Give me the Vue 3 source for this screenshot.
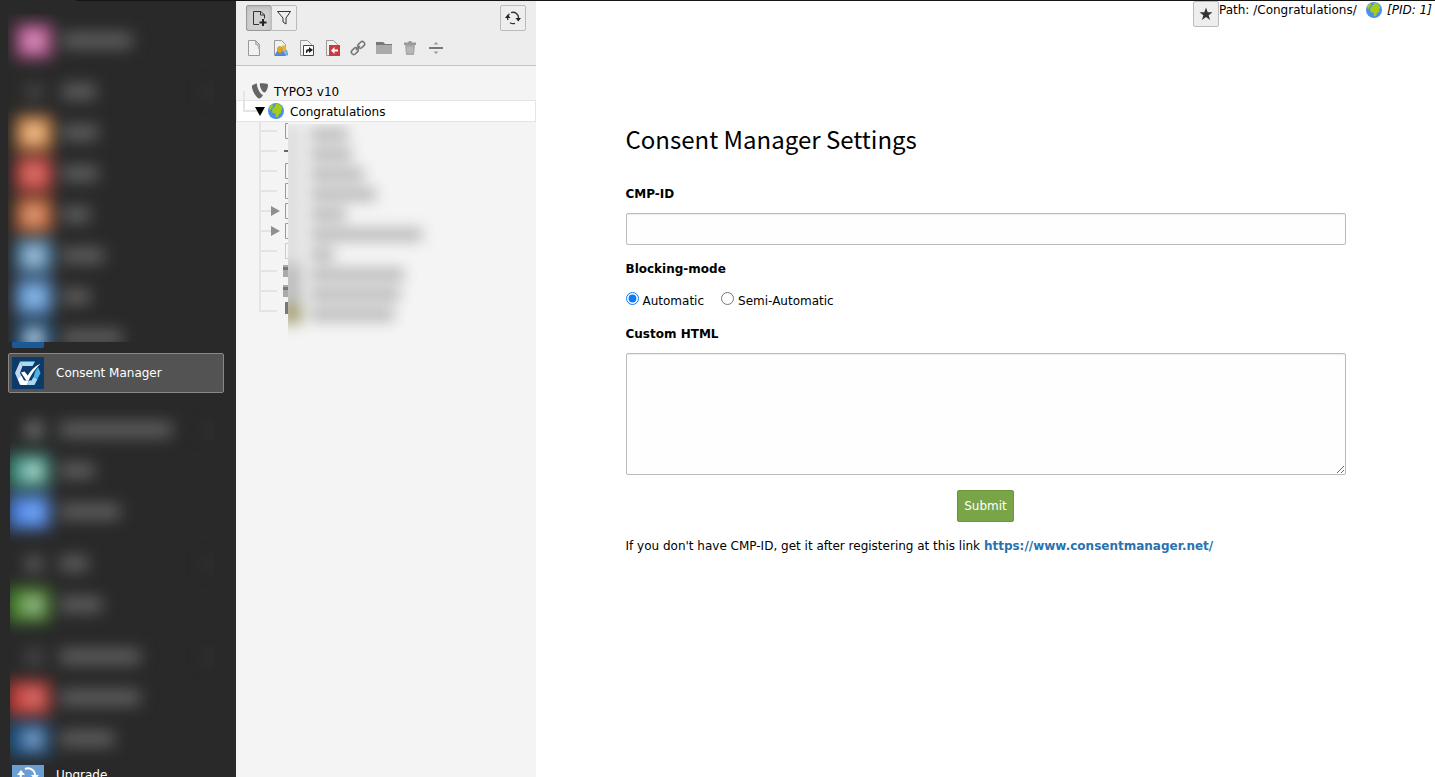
<script setup>
import { ref } from 'vue'

const cmpId = ref('')
const mode = ref('automatic')
const customHtml = ref('')

const upperModules = [
  { color: '#b8558f', core: '#d898c0', text: 70 },
  { head: true, text: 34 },
  { color: '#d98a48', core: '#ecc49c', text: 36 },
  { color: '#d0473f', core: '#d87a76', text: 36 },
  { color: '#cc6a3a', core: '#dca080', text: 28 },
  { color: '#4f8ab8', core: '#b4c8d8', text: 42 },
  { color: '#5b97d8', core: '#94bbe4', text: 28 },
  { color: '#1f5788', core: '#c8d4e0', text: 60 }
]
const lowerModules = [
  { head: true, text: 112, glyph: '#7a7a7a' },
  { color: '#3f9080', core: '#b8dcd6', text: 34 },
  { color: '#4a80dd', core: '#7aacfa', text: 60 },
  { head: true, text: 28, glyph: '#606060' },
  { color: '#4b8a2c', core: '#a0b898', text: 42 },
  { head: true, text: 80, glyph: '#4c4c4c' },
  { color: '#c4403a', core: '#d87470', text: 80 },
  { color: '#20568a', core: '#8aa8cc', text: 54 }
]
const pages = [
  { kind: 'page', text: 38 },
  { kind: 'divider', text: 42 },
  { kind: 'page', text: 54 },
  { kind: 'page', text: 66 },
  { kind: 'page', open: true, text: 36 },
  { kind: 'page', open: true, text: 112 },
  { kind: 'pale', text: 24 },
  { kind: 'folder', text: 94 },
  { kind: 'folder', text: 90 },
  { kind: 'dark', text: 84 }
]
</script>

<template>
  <div class="shell">
    <nav class="modules" aria-label="Modules">
      <div class="hazy upper">
        <ul class="haze">
          <li v-for="(m, i) in upperModules" :key="i" :class="{ head: m.head }">
            <span v-if="!m.head" class="blob" :style="{ background: m.color }"><i :style="{ background: m.core }"></i></span>
            <span v-else class="glyph"></span>
            <span class="bar" :style="{ width: m.text + 'px' }"></span>
            <span v-if="m.head" class="chev"></span>
          </li>
        </ul>
      </div>
      <div class="tile-edge"></div>
      <a href="#" class="module active">
        <svg class="tile" viewBox="0 0 32 32" aria-hidden="true">
          <rect width="32" height="32" rx="1" fill="#0b3a6b" />
          <path d="M8 4.500h15L20.500 9h-10z" fill="#a6dcf2" />
          <path d="M8 4.500L3 16l5 12 3.500-5L8 16l2.500-7z" fill="#c3d5ee" />
          <path d="M6 22l2.500 6H15l2-4.500h-5L9.500 19z" fill="#fff" />
          <path d="M15 28h7.500l3-6-4-2-2 3.500H17z" fill="#a9d8f1" />
          <path d="M25.500 22l3-6-2.500-6-3 5-1.500 5z" fill="#4bb4e0" />
          <path d="M9 15.500l3.500-1 3.200 4Q20.500 10.500 28.500 6.500 21 14 16.500 23.500h-2.200z" fill="#fff" />
        </svg>
        <span>Consent Manager</span>
      </a>
      <div class="hazy lower">
        <ul class="haze">
          <li v-for="(m, i) in lowerModules" :key="i" :class="{ head: m.head }">
            <span v-if="!m.head" class="blob wide" :style="{ background: m.color }"><i :style="{ background: m.core }"></i></span>
            <span v-else class="glyph" :style="{ background: m.glyph }"></span>
            <span class="bar" :style="{ width: m.text + 'px' }"></span>
            <span v-if="m.head" class="chev"></span>
          </li>
        </ul>
      </div>
      <a href="#" class="module upgrade">
        <svg class="tile" viewBox="0 0 32 32" aria-hidden="true">
          <rect width="32" height="32" fill="#6b9fd2" />
          <g fill="none" stroke="#fff" stroke-width="2"><path d="M13 10a7 7 0 0 1 10 7" /><path d="M19 23a7 7 0 0 1-10-8" /></g>
          <path d="M19 16h8l-4 5zM5 16h8l-4-5z" fill="#fff" />
        </svg>
        <span>Upgrade</span>
      </a>
    </nav>

    <section class="pagetree" aria-label="Page tree">
      <header class="toolbar">
        <div class="tools">
          <div class="group">
            <button type="button" class="tool pressed" aria-label="Create new pages">
              <svg width="16" height="16" viewBox="0 0 16 16"><path d="M8 14.500H2.500V1.500H10L13.500 5V8.500M9.500 1.500V5H13.500" fill="none" stroke="#333" /><path d="M12 9v7M8.500 12.500h7" stroke="#222" stroke-width="2" /></svg>
            </button>
            <button type="button" class="tool" aria-label="Filter">
              <svg width="16" height="16" viewBox="0 0 16 16"><path d="M1.500 1.500h13L10 8v6l-3 -2V8z" fill="none" stroke="#333" /></svg>
            </button>
          </div>
          <button type="button" class="tool single" aria-label="Refresh">
            <svg width="16" height="16" viewBox="0 0 16 16"><path d="M6 2.700a5.500 5.500 0 0 1 7.500 5.500M2.500 8a5.500 5.500 0 0 0 .6 2M10 13.300a5.500 5.500 0 0 1-5 -.6M2.500 8a5.500 5.500 0 0 1 2-4.200" fill="none" stroke="#333" stroke-width="1.300" /><path d="M10.500 8h5.500l-2.700 3.500zM0 8h5.500L2.700 4.500z" fill="#222" /></svg>
          </button>
        </div>
        <div class="newpages">
          <svg viewBox="0 0 16 16"><path d="M2.500.500h7l4 4v11h-11z" fill="#f1f1f1" stroke="#999" /><path d="M9.500.500v4h4v6z" fill="#ccc" stroke="#999" stroke-width=".6" /></svg>
          <svg viewBox="0 0 16 16"><path d="M2.500.500h7l4 4v11h-11z" fill="#f1f1f1" stroke="#999" /><path d="M11 10h3.500l1.500 5h-6z" fill="#84baf0" stroke="#4d79b5" stroke-width=".6" /><path d="M9.500 10V7.500c0-3 4.500-3 4.500 0V10l-2 1z" fill="#efb22b" /><path d="M3.500 15.700c0-4 2-4.200 4.500-4.200s4.500.200 4.500 4.200z" fill="#4b91e2" stroke="#3a6fb0" stroke-width=".5" /><path d="M5.500 12V9c0-3.500 4.500-3.500 4.500 0v3l-2 1.500z" fill="#e7a521" stroke="#8c671d" stroke-width=".4" /></svg>
          <svg viewBox="0 0 16 16"><path d="M2.500.500h7l4 4v11h-11z" fill="#f1f1f1" stroke="#999" /><path d="M5.500 5.500h10v10h-10z" fill="#fff" stroke="#444" /><path d="M8 13v-2q0-2 3-2V7l4 3-4 3v-2q-2 0-2 2z" fill="#222" /></svg>
          <svg viewBox="0 0 16 16"><path d="M2.500.500h7l4 4v11h-11z" fill="#f1f1f1" stroke="#999" /><path d="M5 5h11v11H5z" fill="#c83c3c" /><path d="M7 10.500L10.500 7v2.500H14v2h-3.500V14z" fill="#fff" /></svg>
          <svg viewBox="0 0 16 16"><g fill="none" stroke="#777" stroke-width="1.600"><rect x="7.500" y="2.500" width="7.500" height="4.800" rx="2.400" transform="rotate(-45 11.200 4.900)" /><rect x="1" y="8.700" width="7.500" height="4.800" rx="2.400" transform="rotate(-45 4.800 11.100)" /><path d="M6 10l4-4" /></g></svg>
          <svg viewBox="0 0 16 16"><path d="M0 2h7l2 2h7v10H0z" fill="#aaa" /><path d="M0 2h7l2 2h7v1H0z" fill="#777" /></svg>
          <svg viewBox="0 0 16 16"><path d="M3 5h10l-1 10H4z" fill="#aaa" /><path d="M2 2.500h4l1-1.500h2l1 1.500h4V5H2z" fill="#999" /><path d="M6 7v6M8 7v6M10 7v6" stroke="#c4c4c4" /></svg>
          <svg viewBox="0 0 16 16"><path d="M1 7h14v2H1z" fill="#777" /><path d="M5.500 4.500L8 2l2.500 2.500zM5.500 11.500L8 14l2.500-2.500z" fill="#999" /></svg>
        </div>
      </header>

      <div class="root">
        <svg class="root-line" width="8" height="20" viewBox="0 0 8 20"><path d="M1 10v10" stroke="#e4e4e4" stroke-width="2" /></svg>
        <svg width="16" height="16" viewBox="0 0 16 16"><path d="M0 2.500Q2 .800 5 .500C4.500 4 8 11 11 12c-1 2-2.500 3.500-4 3.500C4.500 15.500-1 6 0 2.500z" fill="#666" /><path d="M8 .300c4 0 8 .200 8 1.700 0 3-2 7.500-3.500 7.500C10 9.500 7 3 8 .300z" fill="#666" /></svg>
        <span>TYPO3 v10</span>
      </div>
      <div class="selected">
        <svg width="22" height="20" viewBox="0 0 22 20"><path d="M1 0v10h13" fill="none" stroke="#e4e4e4" stroke-width="2" /><path d="M12 6h10l-5 9z" /></svg>
        <svg class="globe" width="16" height="16" viewBox="0 0 16 16"><circle cx="8" cy="8" r="8" fill="#4b90e8" /><path d="M1 5l2-3 2-.500 0 2-2 2.500-1 2zM6.500 3.500L8 2l-1-1 3-.300 3 2 1.500 3-1.500 1.500.500 2-2.500 2-1 2.500-2 .500-.500-3.500-3-1-.500-2.500 1-2z" fill="#a4cc18" /></svg>
        <span>Congratulations</span>
      </div>
      <div class="children">
        <div class="branches">
          <svg v-for="(p, i) in pages" :key="i" width="29" height="20" viewBox="0 0 29 20">
            <path :d="i === pages.length - 1 ? 'M1 0v10h17' : 'M1 0v20M1 10h17'" fill="none" stroke="#e4e4e4" stroke-width="2" />
            <path v-if="p.open" d="M12 5l9 5-9 5z" fill="#8f8f8f" />
            <path v-if="p.kind === 'page'" d="M29 2.500h-2.500v15h2.500" fill="none" stroke="#999" />
            <path v-if="p.kind === 'pale'" d="M29 2.500h-2.500v15h2.500" fill="none" stroke="#ccc" />
            <path v-if="p.kind === 'divider'" d="M25 9h4v2h-4z" fill="#666" />
            <g v-if="p.kind === 'folder'"><path d="M24 4h5v12h-5z" fill="#aaa" /><path d="M24 6h5v3h-5z" fill="#777" /></g>
            <path v-if="p.kind === 'dark'" d="M26 1h3v12h-3z" fill="#777" />
          </svg>
        </div>
        <div class="veil">
          <ul>
            <li v-for="(p, i) in pages" :key="i" :class="p.kind"><i></i><span :style="{ width: p.text + 'px' }"></span></li>
          </ul>
        </div>
      </div>
    </section>

    <main class="content">
      <header class="docheader">
        <button type="button" class="tool star" aria-label="Bookmark">
          <svg width="16" height="16" viewBox="0 0 16 16"><path d="M8 1.500l1.700 4.700h4.800l-3.900 3 1.500 4.800L8 11.100 3.900 14l1.500-4.800-3.900-3h4.800z" fill="#333" /></svg>
        </button>
        <span class="path">Path: /Congratulations/</span>
        <svg class="globe" width="16" height="16" viewBox="0 0 16 16"><circle cx="8" cy="8" r="8" fill="#4b90e8" /><path d="M1 5l2-3 2-.500 0 2-2 2.500-1 2zM6.500 3.500L8 2l-1-1 3-.300 3 2 1.500 3-1.500 1.500.500 2-2.500 2-1 2.500-2 .500-.500-3.500-3-1-.500-2.500 1-2z" fill="#a4cc18" /></svg>
        <em>[PID: 1]</em>
      </header>
      <form class="settings" @submit.prevent>
        <h1>Consent Manager Settings</h1>
        <label class="title" for="cmp">CMP-ID</label>
        <input id="cmp" v-model="cmpId" class="field" type="text" />
        <fieldset>
          <legend class="title">Blocking-mode</legend>
          <div class="radios">
            <label><input v-model="mode" type="radio" name="mode" value="automatic" /><span>Automatic</span></label>
            <label><input v-model="mode" type="radio" name="mode" value="semi" /><span>Semi-Automatic</span></label>
          </div>
        </fieldset>
        <label class="title" for="html">Custom HTML</label>
        <textarea id="html" v-model="customHtml" class="field"></textarea>
        <button type="submit" class="submit">Submit</button>
        <p>If you don't have CMP-ID, get it after registering at this link <a href="https://www.consentmanager.net/">https://www.consentmanager.net/</a></p>
      </form>
    </main>
  </div>
</template>

<style>
body { margin: 0; overflow: hidden; }
</style>

<style scoped>
* { box-sizing: border-box; }
ul { list-style: none; margin: 0; padding: 0; }
svg { display: block; flex: none; }
button, input, textarea { font: inherit; }
.shell {
  display: grid;
  grid-template-columns: 236px 300px minmax(0, 1fr);
  height: 100vh;
  overflow: hidden;
  font: 12px/18px Verdana, "DejaVu Sans", sans-serif;
  color: #000;
  background: linear-gradient(#151515, #151515) 76px 0 / 100% 1px no-repeat #292929;
}

.modules { display: flex; flex-direction: column; padding: 14px 12px 0 8px; overflow: hidden; }
.hazy { position: relative; flex: none; overflow: hidden; background: #292929; }
.upper { height: 328px; margin-right: 10px; padding-top: 6px; }
.lower { height: 356px; margin: 16px 10px 0 2px; }
.haze { filter: blur(8px); }
.haze li { display: flex; align-items: center; height: 41px; padding-left: 8px; }
.upper .haze li.head { margin-top: 10px; }
.lower .haze li.head { margin-top: 11px; }
.lower .haze li.head:first-child { margin-top: 0; }
.lower .haze li { padding-left: 0; }
.blob { display: flex; align-items: center; justify-content: center; width: 36px; height: 34px; }
.lower .blob { width: 42px; margin-left: -2px; }
.lower .blob i { margin-left: 8px; }
.blob i { width: 18px; height: 18px; }
.glyph { width: 16px; height: 16px; margin: 0 10px; background: #484848; }
.lower .glyph { margin: 0 8px 0 16px; }
.bar { height: 15px; margin-left: 10px; background: #626262; }
.chev { width: 10px; height: 10px; margin-left: auto; background: #383838; }
.tile-edge { flex: none; width: 32px; height: 6px; margin: 0 0 5px 4px; border-radius: 0 0 2px 2px; background: #1a5a96; }
.module { display: flex; flex: none; align-items: center; gap: 12px; height: 40px; padding: 0 3px; border: 1px solid transparent; border-radius: 2px; color: #fff; text-decoration: none; }
.module.active { background: #535353; border-color: #888; }
.upgrade { margin-top: -10px; }
.tile { width: 32px; height: 32px; }

.pagetree { margin-top: 1px; background: #f4f4f4; overflow: hidden; }
.toolbar { padding: 4px 10px 9px; background: #ededed; border-bottom: 1px solid #c3c3c3; }
.tools { display: flex; justify-content: space-between; }
.group { display: flex; }
.tool { display: flex; align-items: center; justify-content: center; width: 26px; height: 26px; padding: 0; border: 1px solid #bbb; border-radius: 2px; background: #eee; }
.group .tool + .tool { margin-left: -1px; }
.tool.pressed { background: #d1d1d1; border-color: #999; box-shadow: inset 0 2px 4px #0002; }
.newpages { display: flex; gap: 10px; margin-top: 9px; }
.newpages svg { width: 16px; height: 16px; }
.root { display: flex; align-items: center; height: 20px; margin-top: 15px; padding-left: 7px; }
.root span, .selected span { margin-left: 6px; padding-top: 2px; }
.root-line + svg { margin-left: 1px; }
.selected { display: flex; align-items: center; height: 22px; margin-top: -1px; padding-left: 6px; background: #fff; border: 1px solid #e4e4e4; }
.selected .globe { margin-left: 3px; }
.children { display: flex; margin-top: -1px; padding-left: 23px; }
.branches { flex: none; width: 29px; overflow: hidden; }
.veil { flex: 1; margin-top: 3px; padding-bottom: 20px; overflow: hidden; }
.veil ul { filter: blur(7px); }
.veil li { display: flex; align-items: center; height: 20px; }
.veil li i { width: 22px; height: 20px; margin-left: -8px; background: #dedede; }
.veil li span { height: 13px; margin-left: 8px; background: #b8b8b8; }
.veil li.folder i { background: #bcbcbc; }
.veil li.dark i { background: #a8a47c; }

.content { margin-top: 1px; background: #fff; overflow: hidden; }
.docheader { display: flex; justify-content: flex-end; align-items: flex-start; height: 26px; white-space: pre; }
.docheader .path { min-width: 142px; }
.docheader .globe { margin: 1px 5px 0; }
.docheader em { min-width: 48px; }
.settings { display: flex; flex-direction: column; max-width: 720px; margin: 95px auto 0; }
h1 { margin: 0 0 29px; font: 400 24px/34px "Source Sans Pro", "Noto Sans CJK SC", sans-serif; }
.title { display: block; padding: 0; font-weight: 700; }
.field { display: block; width: 100%; height: 32px; margin: 10px 0 15px; padding: 6px; border: 1px solid #bbb; border-radius: 2px; background: #fefefe; box-shadow: inset 0 1px 1px #00000013; }
textarea.field { height: 122px; resize: vertical; }
fieldset { margin: 0 0 15px; padding: 0; border: 0; }
.radios { display: flex; gap: 17px; margin-top: 14px; }
.radios label { display: flex; align-items: flex-start; }
.radios input { width: 13px; height: 13px; margin: 0 4px 0 0; accent-color: #0a7aff; }
.submit { align-self: center; height: 32px; padding: 0 6px; border: 1px solid #6b9539; border-radius: 2px; background: #79a548; color: #fff; }
p { margin: 15px 0 0; }
p a { color: #2a72af; font-weight: 700; text-decoration: none; }
</style>
